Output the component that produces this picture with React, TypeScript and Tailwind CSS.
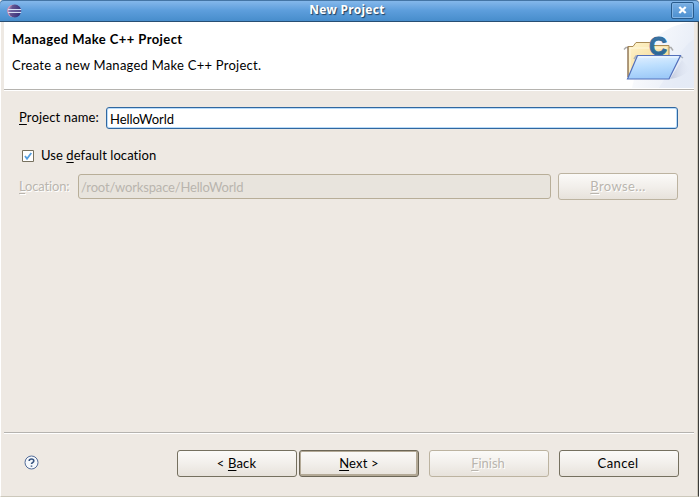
import React from "react";

type ButtonProps = {
  children: React.ReactNode;
  variant?: "normal" | "focused" | "disabled";
  className?: string;
};

const variants = {
  normal: "border-[#75705f] text-black",
  focused: "border-[#6c6656] text-black shadow-[inset_0_0_0_1px_#b3a996,inset_-1px_-1px_0_1px_#b3a996]",
  disabled: "border-[#bcb3a0] text-[#b9b5ae] [text-shadow:1px_1px_0_#fff]",
};

function Button({ children, variant = "normal", className = "" }: ButtonProps) {
  return (
    <button
      className={`h-[27px] w-[120px] shrink-0 whitespace-nowrap rounded-[3px] border bg-linear-to-b from-[#fbfaf8] via-[#f2efeb] to-[#e7e2db] pb-px text-center leading-[24px] ${variants[variant]} ${className}`}
    >
      {children}
    </button>
  );
}

function Key({ children }: { children: React.ReactNode }) {
  return <span className="underline decoration-1 underline-offset-[2px] [text-decoration-skip-ink:none]">{children}</span>;
}

function EclipseLogo() {
  return (
    <svg width="15" height="14" viewBox="0 0 15 14">
      <defs>
        <linearGradient id="orb" x1="0" x2="1" y1="0" y2="0.3">
          <stop offset="0" stopColor="#c0a2cb" />
          <stop offset="0.35" stopColor="#62538f" />
          <stop offset="1" stopColor="#3a327c" />
        </linearGradient>
      </defs>
      <ellipse cx="6.2" cy="7" rx="6" ry="6.2" fill="#d995b5" />
      <circle cx="7.8" cy="7" r="6.4" fill="url(#orb)" />
      <path d="M2 7h12" stroke="#7672ae" />
      <path d="M1 5.5h13.2M1 8.5h13.2" stroke="#d5dff4" strokeWidth="1" />
    </svg>
  );
}

function FolderBanner() {
  return (
    <svg width="94" height="67" viewBox="600 22 94 67" className="block">
      <defs>
        <linearGradient id="sweep" x1="0" x2="1" y1="0" y2="0.4">
          <stop offset="0" stopColor="#fff" />
          <stop offset="1" stopColor="#dce4f3" />
        </linearGradient>
        <linearGradient id="back" x1="0" x2="1" y1="0" y2="1">
          <stop offset="0" stopColor="#fff5cd" />
          <stop offset="1" stopColor="#f1cf84" />
        </linearGradient>
        <linearGradient id="front" x1="0" x2="0.2" y1="0" y2="1">
          <stop offset="0" stopColor="#e4f0ff" />
          <stop offset="0.5" stopColor="#bddffe" />
          <stop offset="1" stopColor="#9ecaf8" />
        </linearGradient>
        <linearGradient id="shade" x1="0" x2="1">
          <stop offset="0" stopColor="#a8b0c8" />
          <stop offset="1" stopColor="#dbe2f1" stopOpacity="0" />
        </linearGradient>
        <linearGradient id="letter" x1="0" x2="0" y1="0" y2="1">
          <stop offset="0" stopColor="#3f78a8" />
          <stop offset="1" stopColor="#276491" />
        </linearGradient>
      </defs>
      <path d="M632 88C640 48 660 24 694 22V88Z" fill="url(#sweep)" opacity="0.65" />
      <path d="M659 88C669 73 679 49 694 39V88Z" fill="#dfe7f5" opacity="0.45" />
      <path d="M670 79L682 60L690 69Q684 77 670 79Z" fill="url(#shade)" opacity="0.6" />
      <path d="M624 49.5l2-2h45l2 3" fill="none" stroke="#adadad" strokeWidth="1.5" />
      <path d="M628 77V46.5h5l3-4h14l2 3h17v20Z" fill="url(#back)" stroke="#a98b55" />
      <path d="M628 77V46.5" fill="none" stroke="#88705c" />
      <path d="M630 73V48h37" fill="none" stroke="#fff8df" />
      <text x="649" y="54.5" fontFamily="Liberation Sans" fontWeight="700" fontSize="25" fill="url(#letter)" stroke="#326c9b" strokeWidth="0.9">C</text>
      <path d="M634 59l2-3h44l3 2" fill="none" stroke="#a8b1bd" strokeWidth="1.5" />
      <path d="M637.5 55.5h43L669 79h-41.5Z" fill="url(#front)" stroke="#5370bb" strokeWidth="1.2" />
      <path d="M638.5 57h40" stroke="#f5faff" />
    </svg>
  );
}

export default function App() {
  return (
    <div className="flex h-[497px] w-[699px] flex-col overflow-hidden bg-[#eee9e3] font-['Lato','Noto_Sans',sans-serif] text-[13px] text-black">
      <header className="flex h-[22px] shrink-0 items-center rounded-t-[4px] border-b border-[#284e73] bg-linear-to-b from-[#88baec] via-[#5d9edc] to-[#478dcc] pr-[5px] pl-[7px] shadow-[inset_0_1px_0_#4475a5]">
        <EclipseLogo />
        <h1 className="flex-1 text-center font-['Noto_Sans'] text-[12px] leading-[18px] font-bold tracking-[0.3px] text-white [text-shadow:1px_1px_1px_#203e5c]"><span className="block pb-[2px] pl-px">New Project</span></h1>
        <button aria-label="Close" className="mb-px flex h-[17px] w-[23px] items-center justify-center rounded-[2px] border border-[#285b8c] bg-linear-to-b from-[#79afe4] to-[#4b8fcf] shadow-[inset_0_0_0_1px_#83b5e5]">
          <svg width="9" height="8" viewBox="0 0 9 8"><path d="M1.3 1l6.4 6M7.7 1L1.3 7" stroke="#fff" strokeWidth="2.3" /></svg>
        </button>
      </header>
      <div className="flex flex-1 flex-col border-r border-b border-l border-r-[#3c3c3b] border-b-[#ccc8bb] border-l-white pr-[4px] pl-[3px] shadow-[inset_-1px_0_0_#ccc8bb]">
        <section className="flex h-[68px] shrink-0 justify-between border-b border-[#b5b3af] bg-white pl-2">
          <div className="pt-[8px]">
            <h2 className="h-[18px] text-[13px] leading-[18px] font-bold"><span className="tracking-[0.42px]">Managed Make C++ Project</span></h2>
            <p className="mt-[8px] leading-[18px]"><span className="tracking-[0.25px]">Create a new Managed Make C++ Project.</span></p>
          </div>
          <FolderBanner />
        </section>
        <main className="flex-1 border-t border-white pt-[16px] pr-[16px] pl-[15px]">
          <div className="flex h-[22px] items-center">
            <label className="w-[87px] tracking-[0.13px] whitespace-nowrap"><Key>P</Key>roject name:</label>
            <div className="h-[22px] flex-1 rounded-[3px] border border-[#31679f] bg-white px-[3px] leading-[22px] tracking-[-0.05px] shadow-[inset_0_0_0_1px_#b8dcfb]">HelloWorld</div>
          </div>
          <div className="mt-[18px] flex h-[18px] items-center pl-[3px]">
            <svg width="12" height="12" viewBox="0 0 12 12"><path d="M.5.5h11v11H.5z" fill="#fff" stroke="#77715f" /><path d="M3 6l2 2.7L9.3 3" fill="none" stroke="#559edf" strokeWidth="1.8" /></svg>
            <span className="ml-[7px] tracking-[0.07px]">Use <Key>d</Key>efault location</span>
          </div>
          <div className="mt-[8px] flex h-[27px] items-center text-[#b9b5ae]">
            <label className="w-[59px] tracking-[-0.15px] [text-shadow:1px_1px_0_#fff]"><Key>L</Key>ocation:</label>
            <div className="h-[25px] w-[473px] rounded-[3px] border border-[#b8ae98] bg-[#e8e4dd] px-[2px] leading-[25px] tracking-[-0.17px]">/root/workspace/HelloWorld</div>
            <Button variant="disabled" className="ml-[7px] tracking-[0.4px]"><Key>B</Key>rowse...</Button>
          </div>
        </main>
        <footer className="flex h-[64px] shrink-0 border-t border-[#b5b3af] pr-[15px] pl-[20px] shadow-[inset_0_1px_0_#fff]">
          <svg width="15" height="15" viewBox="0 0 15 15" className="mt-[22px]">
            <circle cx="7.5" cy="7.5" r="6.5" fill="#f5f8fc" stroke="#526c99" />
            <path d="M5.2 6Q5.2 4 7.5 4T9.8 6Q9.8 7 8.4 7.7Q7.5 8.2 7.5 9.1M7.5 10.4v1.4" fill="none" stroke="#37547f" strokeWidth="1.6" />
          </svg>
          <div className="mt-[17px] ml-auto flex">
            <Button className="pr-px tracking-[0.2px]">&lt; <Key>B</Key>ack</Button>
            <Button variant="focused" className="ml-[2px] tracking-[0.2px]"><Key>N</Key>ext &gt;</Button>
            <Button variant="disabled" className="ml-[10px] pr-[2px]"><Key>F</Key>inish</Button>
            <Button className="ml-[10px] pr-[2px] tracking-[0.4px]">Cancel</Button>
          </div>
        </footer>
      </div>
    </div>
  );
}
